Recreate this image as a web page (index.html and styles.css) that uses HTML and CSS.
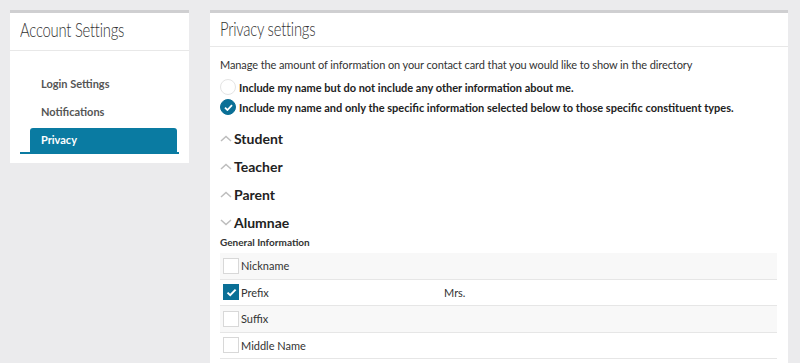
FILE: index.html
```html
<!DOCTYPE html>
<html lang="en">
<head>
  <meta charset="UTF-8">
  <title>Account Settings - Privacy</title>
  <link rel="stylesheet" href="styles.css">
</head>
<body>
  <div class="sidebar panel">
    <h2 class="panel-head side-head"><span>Account Settings</span></h2>
    <ul class="nav">
      <li><a href="#">Login Settings</a></li>
      <li><a href="#">Notifications</a></li>
      <li class="active"><a href="#">Privacy</a></li>
    </ul>
  </div>

  <div class="main panel">
    <h2 class="panel-head"><span>Privacy settings</span></h2>
    <div class="content">
      <p class="intro">Manage the amount of information on your contact card that you would like to show in the directory</p>

      <label class="radio">
        <span class="dot"></span>
        Include my name but do not include any other information about me.
      </label>
      <label class="radio">
        <span class="dot on">
          <svg width="9" height="7" viewBox="0 0 9 7"><path d="M1 3.6 L3.4 6 L8 1.2" fill="none" stroke="#fff" stroke-width="1.8"/></svg>
        </span>
        Include my name and only the specific information selected below to those specific constituent types.
      </label>

      <div class="groups">
        <div class="group">
          <svg class="chev" width="12" height="7" viewBox="0 0 12 7"><path d="M1 6 L6 1.5 L11 6" fill="none" stroke="#bdbdbd" stroke-width="1.5"/></svg>
          Student
        </div>
        <div class="group">
          <svg class="chev" width="12" height="7" viewBox="0 0 12 7"><path d="M1 6 L6 1.5 L11 6" fill="none" stroke="#bdbdbd" stroke-width="1.5"/></svg>
          Teacher
        </div>
        <div class="group">
          <svg class="chev" width="12" height="7" viewBox="0 0 12 7"><path d="M1 6 L6 1.5 L11 6" fill="none" stroke="#bdbdbd" stroke-width="1.5"/></svg>
          Parent
        </div>
        <div class="group">
          <svg class="chev" width="12" height="7" viewBox="0 0 12 7"><path d="M1 1 L6 5.5 L11 1" fill="none" stroke="#bdbdbd" stroke-width="1.5"/></svg>
          Alumnae
        </div>
      </div>

      <div class="sub-head">General Information</div>
      <div class="fields">
        <div class="field">
          <span class="box"></span>
          <span class="name">Nickname</span>
          <span class="value"></span>
        </div>
        <div class="field">
          <span class="box on">
            <svg width="11" height="9" viewBox="0 0 11 9"><path d="M1.5 4.6 L4.2 7.2 L9.6 1.6" fill="none" stroke="#fff" stroke-width="2"/></svg>
          </span>
          <span class="name">Prefix</span>
          <span class="value">Mrs.</span>
        </div>
        <div class="field">
          <span class="box"></span>
          <span class="name">Suffix</span>
          <span class="value"></span>
        </div>
        <div class="field">
          <span class="box"></span>
          <span class="name">Middle Name</span>
          <span class="value"></span>
        </div>
      </div>
    </div>
  </div>
</body>
</html>
```

FILE: styles.css
```css
*{
  margin: 0;
  padding: 0;
  box-sizing: border-box;
}
body{
  background: #ebebed;
  font-family: Lato, "Noto Sans", sans-serif;
  color: #222;
  display: flex;
  align-items: flex-start;
  gap: 21px;
  padding: 10px 12px 0 10px;
  height: 363px;
  overflow: hidden;
}
li{
  list-style: none;
}
a{
  text-decoration: none;
  color: inherit;
}

.panel{
  background: #fff;
  border-top: 3px solid #cfcfd1;
}
.panel-head{
  font-weight: 300;
  font-size: 19px;
  letter-spacing: -0.3px;
  color: #333;
  height: 34px;
  line-height: 32px;
  padding-left: 10px;
  border-bottom: 1px solid #e8e8e8;
  white-space: nowrap;
}
/* the original heading face is a condensed one */
.panel-head span{
  display: inline-block;
  transform: scaleX(0.78);
  transform-origin: left center;
}
.side-head{
  height: 38px;
  line-height: 34px;
}

.sidebar{
  width: 179px;
  padding-bottom: 9px;
}
.nav{
  display: flex;
  flex-direction: column;
  gap: 4px;
  padding: 21px 10px 0 10px;
}
.nav li{
  height: 24px;
}
.nav a{
  display: block;
  height: 24px;
  line-height: 24px;
  padding-left: 21px;
  font-size: 11px;
  font-weight: bold;
  color: #555;
}
.nav .active{
  height: 26px;
  border-bottom: 2px solid #0a7ba2;
}
.nav .active a{
  margin: 0 2px 0 10px;
  padding-left: 11px;
  background: #0a7ba2;
  color: #fff;
  border-radius: 3px 3px 0 0;
}

.main{
  flex: 1;
  height: 360px;
}
.content{
  padding: 10px 10px 0 10px;
}
.intro{
  font-size: 11px;
  letter-spacing: -0.1px;
  color: #333;
  line-height: 16px;
  margin-bottom: 4px;
}
.radio{
  display: flex;
  align-items: center;
  gap: 3px;
  height: 20px;
  font-size: 11px;
  font-weight: bold;
  color: #222;
}
.dot{
  width: 16px;
  height: 16px;
  border-radius: 50%;
  border: 1px solid #e4e4e4;
  display: flex;
  align-items: center;
  justify-content: center;
}
.dot.on{
  background: #0a6f96;
  border-color: #0a6f96;
}

.groups{
  margin-top: 7px;
}
.group{
  display: flex;
  align-items: center;
  gap: 2px;
  height: 28px;
  font-size: 14px;
  font-weight: bold;
  color: #222;
}
.chev{
  margin-top: 1px;
}

.sub-head{
  font-size: 10px;
  font-weight: bold;
  color: #333;
  height: 17px;
  line-height: 12px;
}
.fields{
  margin-right: 1px;
}
.field{
  display: flex;
  align-items: center;
  height: 26.5px;
  border-bottom: 1px solid #e6e6e6;
  font-size: 11px;
  color: #333;
}
.field:nth-child(odd){
  background: #f8f8f8;
}
.box{
  width: 16px;
  height: 16px;
  margin-left: 3px;
  margin-right: 2px;
  border: 1px solid #d8d8d8;
  background: #fff;
  display: flex;
  align-items: center;
  justify-content: center;
}
.box.on{
  background: #0a6f96;
  border-color: #0a6f96;
}
.name{
  width: 203px;
}
```
